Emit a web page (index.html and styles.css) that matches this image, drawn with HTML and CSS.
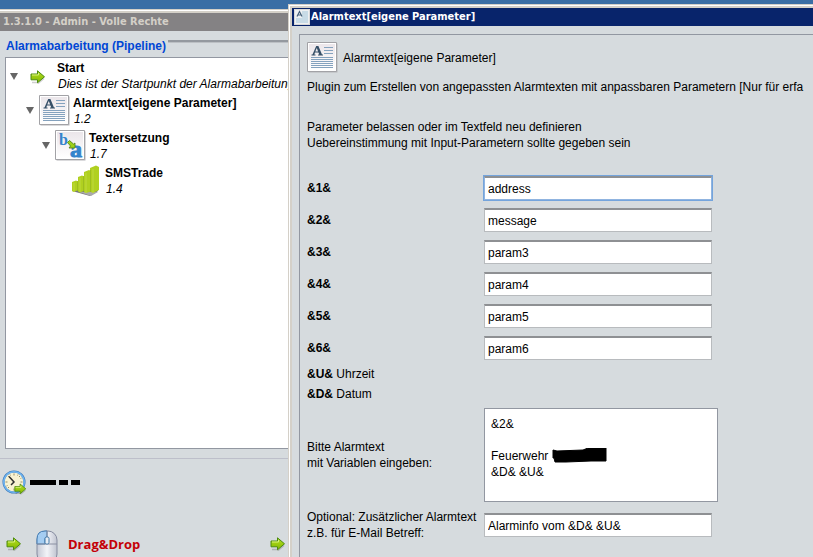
FILE: index.html
```html
<!DOCTYPE html>
<html lang="de">
<head>
<meta charset="utf-8">
<title>Alarmtext[eigene Parameter]</title>
<link rel="stylesheet" href="styles.css">
</head>
<body>
<svg class="defs" aria-hidden="true">
  <defs>
    <linearGradient id="green" x1="0" y1="0" x2="0" y2="1"><stop offset="0" stop-color="#b4e020"/><stop offset="1" stop-color="#84b800"/></linearGradient>
    <linearGradient id="paper" x1="0" y1="0" x2="0" y2="1"><stop offset="0" stop-color="#ebe6ea"/><stop offset="1" stop-color="#fff"/></linearGradient>
    <linearGradient id="shell" x1="0" y1="0" x2="1" y2="0"><stop offset="0" stop-color="#c4c8d4"/><stop offset=".5" stop-color="#f2f4f8"/><stop offset="1" stop-color="#c0c4d0"/></linearGradient>
    <symbol id="arrow" viewBox="0 0 16 14">
      <path d="M2 12.5h6M8 13.5l6-5" stroke="#00000030" stroke-width="1.5"/>
      <path d="M1 4h6.500V.8L14.500 6.800 7.500 12.800V9.800H1z" fill="url(#green)" stroke="#4c8a10" stroke-linejoin="round"/>
      <path d="M2 5h6.500V3" fill="none" stroke="#d8f080"/>
    </symbol>
    <symbol id="sheet" viewBox="0 0 31 31">
      <path d="M1.500 1.500h29v29h-29z" fill="#b4b4b8"/>
      <path d="M.5.5h29v29H.5z" fill="#fff" stroke="#a2a2a6"/>
      <path d="M2 2h26v26H2z" fill="url(#paper)"/>
      <path d="M17 5.500h9M17 8.500h9M17 11.500h9M4 15.500h22M4 17.500h22M4 19.500h22M4 21.500h22M4 23.500h22M4 25.500h22" stroke="#84a2be"/>
      <path d="M9.200 4h2.200L15 12.500h1v1h-5v-1h1.200l-.7-2H8l-.7 2h1.200v1H4.500v-1h1zM9.800 6l-1.500 3.500h2.800z" fill="#365068" fill-rule="evenodd"/>
    </symbol>
    <symbol id="replace" viewBox="0 0 31 31">
      <path d="M1.500 1.500h29v29h-29z" fill="#b4b4b8"/>
      <path d="M.5.5h29v29H.5z" fill="#fff" stroke="#a2a2a6"/>
      <path d="M2 2h26v26H2z" fill="url(#paper)"/>
      <text class="glyph" x="4" y="15" font-size="16">b</text>
      <text class="glyph heavy" x="15" y="27" font-size="24">a</text>
      <path d="M12.500 12.500l2-2 4 3.500 1.500-1v5h-6l1.500-2z" fill="#9cd018" stroke="#4c7c10" stroke-width=".8"/>
    </symbol>
  </defs>
</svg>

<main class="main-window">
  <header class="main-title">1.3.1.0 - Admin - Volle Rechte</header>
  <section class="pipeline">
    <h2 class="legend">Alarmabarbeitung (Pipeline)</h2>
    <ul class="tree">
      <li class="node">
        <span class="twisty"></span><svg class="icon"><use href="#arrow" width="16" height="14" x="7" y="9"/></svg>
        <span class="caption"><b>Start</b><i>Dies ist der Startpunkt der Alarmabarbeitung</i></span>
      </li>
      <li class="node level-1">
        <span class="twisty"></span><svg class="icon"><use href="#sheet" width="31" height="31"/></svg>
        <span class="caption"><b>Alarmtext[eigene Parameter]</b><i>1.2</i></span>
      </li>
      <li class="node level-2">
        <span class="twisty"></span><svg class="icon"><use href="#replace" width="31" height="31"/></svg>
        <span class="caption"><b>Textersetzung</b><i>1.7</i></span>
      </li>
      <li class="node level-3">
        <span class="twisty leaf"></span>
        <svg class="icon" viewBox="0 0 31 31">
          <path d="M1 26l18 5 8-5V8z" fill="#77777b"/>
          <path d="M8 27l12 4 7-4" fill="#aaa"/>
          <g fill="#b0d020"><path d="M1 17l4-1.500 2 1V25l-4 2-2-1z"/><path d="M7 12l4-1.500 2 1V26l-4 1.500-2-1z"/><path d="M13 7l5-2 2 1v20.500L15 28l-2-1z"/><path d="M19 3l6-2.500L28 2v23l-6 3-3-1.500z"/></g>
          <path d="M3 18v9M9 13v14M15 8v20M22 4v24" stroke="#c4dc48" stroke-width=".8"/>
          <path d="M6.500 16v10M12.500 11v15M19.500 5v22" stroke="#98b820" stroke-width=".8"/>
        </svg>
        <span class="caption"><b>SMSTrade</b><i>1.4</i></span>
      </li>
    </ul>
  </section>
  <footer class="status">
    <div class="clock-row">
      <svg class="clock" viewBox="0 0 25 25">
        <circle cx="12" cy="12" r="10.500" fill="#f8f2d2" stroke="#3978b8" stroke-width="2"/>
        <circle cx="12" cy="12" r="10.200" fill="none" stroke="#70b4f0" stroke-width="1.500"/>
        <path d="M12 3.500v2M12 18.500v2M3.500 12h2M18.500 12h2M6 6l1 1M18 6l-1 1M6 18l1-1M16 4.500l-.5 1M8 4.500l.5 1M19.500 8l-1 .5M4.500 16l1-.5" stroke="#968c68"/>
        <path d="M7 6.500l5 5.500-3 3" fill="none" stroke="#303030" stroke-width="1.500"/>
        <use href="#arrow" x="12" y="13" width="13" height="12"/>
      </svg>
      <span class="dash long"></span><span class="dash"></span><span class="dash"></span>
    </div>
    <div class="drag-row">
      <svg class="arrow" viewBox="0 0 16 14"><use href="#arrow" width="16" height="14"/></svg>
      <svg class="mouse" viewBox="0 0 22 34">
        <rect x="1" y="1" width="20" height="32" rx="9" fill="url(#shell)" stroke="#868ca0"/>
        <path d="M1 14V9q0-8 8-8h2v6q-2 0-2 2v5z" fill="#a4cdf2" stroke="#3d78b0"/>
        <path d="M1 14h20M11 1v6" fill="none" stroke="#8a90a2"/>
        <rect x="9" y="7" width="4" height="7" rx="1.500" fill="#e6edf4" stroke="#4278a8"/>
      </svg>
      <strong class="drag-text">Drag&amp;Drop</strong>
      <svg class="arrow" viewBox="0 0 16 14"><use href="#arrow" width="16" height="14"/></svg>
    </div>
  </footer>
</main>

<section class="dialog" role="dialog" aria-labelledby="dialog-title">
  <header class="dialog-title">
    <svg class="title-icon" viewBox="0 0 16 16"><path d="M0 0h16v16H0z" fill="#d8d8d8"/><path d="M1 1h14v14H1z" fill="#eef0f2"/><path d="M8 2h6v12H2V9h6z" fill="#c8dbe6"/><path d="M3 7.500L5.500 2.500 8 7.500M4 6h3" fill="none" stroke="#48637c" stroke-width="1.200"/></svg>
    <h1 id="dialog-title">Alarmtext[eigene Parameter]</h1>
  </header>
  <form class="panel">
    <div class="plugin-head"><svg class="icon"><use href="#sheet" width="31" height="31"/></svg><span>Alarmtext[eigene Parameter]</span></div>
    <p class="about">Plugin zum Erstellen von angepassten Alarmtexten mit anpassbaren Parametern [Nur für erfa</p>
    <p class="hint">Parameter belassen oder im Textfeld neu definieren<br>Uebereinstimmung mit Input-Parametern sollte gegeben sein</p>
    <div class="field"><label for="p1">&amp;1&amp;</label><input class="active" id="p1" type="text" value="address"></div>
    <div class="field"><label for="p2">&amp;2&amp;</label><input id="p2" type="text" value="message"></div>
    <div class="field"><label for="p3">&amp;3&amp;</label><input id="p3" type="text" value="param3"></div>
    <div class="field"><label for="p4">&amp;4&amp;</label><input id="p4" type="text" value="param4"></div>
    <div class="field"><label for="p5">&amp;5&amp;</label><input id="p5" type="text" value="param5"></div>
    <div class="field"><label for="p6">&amp;6&amp;</label><input id="p6" type="text" value="param6"></div>
    <p class="variable"><b>&amp;U&amp;</b> Uhrzeit</p>
    <p class="variable"><b>&amp;D&amp;</b> Datum</p>
    <div class="field message">
      <label for="text">Bitte Alarmtext<br>mit Variablen eingeben:</label>
      <div class="text-wrap">
        <textarea id="text" spellcheck="false">&amp;2&amp;

Feuerwehr
&amp;D&amp; &amp;U&amp;</textarea>
        <svg class="redaction" viewBox="0 0 55 15"><path d="M1 2l4 1 26-1 5-2h18v13H39l-25 1H3L2 10H1z" stroke="#000"/></svg>
      </div>
    </div>
    <div class="field subject">
      <label for="subject">Optional: Zusätzlicher Alarmtext<br>z.B. für E-Mail Betreff:</label>
      <input id="subject" type="text" value="Alarminfo vom &amp;D&amp; &amp;U&amp;">
    </div>
  </form>
</section>
</body>
</html>
```
FILE: styles.css
```css
* { box-sizing: border-box; }

body {
  margin: 0;
  min-height: 100vh;
  padding-top: 9px;
  display: flex;
  overflow: hidden;
  background: #3a6ea5;
  color: #000;
  font: 12px/16px "Liberation Sans", Arial, sans-serif;
}

h1, h2, p, ul { margin: 0; padding: 0; }
.defs { position: absolute; width: 0; height: 0; }
.icon { flex: none; width: 31px; height: 31px; }
.glyph { fill: #3484cc; font-family: "Liberation Serif", serif; font-weight: bold; }
.heavy { stroke: #3484cc; }

/* Main window */
.main-window {
  flex: 1;
  display: flex;
  flex-direction: column;
  height: calc(100vh - 9px);
  border-top: 1px solid #d4d0c8;
  background: #d6dbde;
  box-shadow: inset 0 1px #fff, inset 0 3px #d4d0c8;
}

.main-title {
  margin-top: 3px;
  padding-left: 3px;
  background: #848284;
  color: #d4d0c8;
  font: bold 11px/18px "DejaVu Sans Condensed", "DejaVu Sans", sans-serif;
}

.pipeline { flex: 1; display: flex; flex-direction: column; padding: 7px 0 0 5px; }

.legend {
  display: flex;
  padding-left: 1px;
  color: #0046d5;
  font-size: 12px;
  line-height: 16px;
  white-space: nowrap;
}
.legend::after {
  content: "";
  flex: 1;
  height: 2px;
  margin: 2px 0 0 2px;
  background: #94999f;
  border-bottom: 1px solid #bcc0c4;
}

.tree {
  flex: 1;
  margin-top: 3px;
  padding-top: 1px;
  list-style: none;
  background: #fff;
  border: 1px solid #9297a1;
}
.node { display: flex; align-items: center; height: 35px; padding-left: 4px; white-space: nowrap; }
.node:first-child { height: 34px; }
.level-1 { padding-left: 20px; }
.level-2 { padding-left: 36px; }
.level-3 { padding-left: 52px; }
.twisty {
  flex: none;
  width: 8px;
  margin-right: 5px;
  border: 4px solid transparent;
  border-top: 7px solid #666;
  border-bottom: 0;
}
.leaf { visibility: hidden; }
.caption { display: flex; flex-direction: column; padding-left: 3px; }
.caption i { padding-left: 1px; }

.status {
  height: 99px;
  margin-top: 9px;
  border-top: 1px solid #bdbfca;
  display: flex;
  flex-direction: column;
  justify-content: space-between;
}
.clock-row { display: flex; align-items: center; gap: 3px; padding: 11px 0 0 2px; }
.clock { width: 25px; height: 25px; }
.dash { width: 9px; height: 5px; background: #000; }
.long { width: 26px; }
.drag-row { display: flex; align-items: center; width: 286px; height: 27px; padding-left: 6px; }
.arrow { width: 16px; height: 14px; }
.mouse { width: 22px; height: 34px; margin: 7px 10px 0 14px; }
.drag-text {
  flex: 1;
  color: #c40008;
  font: bold 13px/20px "Open Sans", "Noto Sans", sans-serif;
}

/* Dialog window, floating over the main window */
.dialog {
  position: absolute;
  inset: 4px 0 0 288px;
  padding: 3px 0 0 3px;
  display: flex;
  flex-direction: column;
  overflow: hidden;
  background: #d6dbde;
  border: solid #d4d0c8;
  border-width: 1px 0 0 1px;
  box-shadow: inset 1px 1px #fff, inset 3px 3px #d4d0c8;
}
.dialog-title {
  display: flex;
  align-items: center;
  gap: 1px;
  padding-left: 2px;
  height: 18px;
  background: #08246b;
  color: #fff;
}
.title-icon { width: 16px; height: 16px; }
.dialog-title h1 { font: bold 11px/18px "DejaVu Sans Condensed", "DejaVu Sans", sans-serif; }

.panel {
  flex: 1;
  margin: 8px 0 0 7px;
  padding: 7px 0 0 7px;
  border: solid #9297a1;
  border-width: 1px 0 0 1px;
  white-space: nowrap;
}
.plugin-head { display: flex; align-items: center; gap: 5px; }
.about { margin-top: 6px; }
.hint { margin: 24px 0 21px; }

.field { display: grid; grid-template-columns: 177px 228px; align-items: center; height: 32px; }
.field label { font-weight: bold; }
.message label, .subject label { font-weight: normal; }

input, textarea {
  width: 100%;
  padding: 0 3px;
  background: #fff;
  border: 1px solid #b8bbbe;
  border-radius: 0;
  color: #000;
  font: inherit;
  outline: 0;
}
input { height: 24px; border-top: 2px solid #8e9093; }
.active { box-shadow: 0 0 0 1px #74a4dc; border-color: #8e9093 #90b4e0 #90b4e0; }

.variable { line-height: 20px; }
.message { grid-template-columns: 177px 234px; height: 94px; margin: 4px 0 7px; }
.text-wrap { position: relative; height: 94px; }
textarea { display: block; height: 100%; padding: 7px 6px; border-color: #9297a1; resize: none; }
.redaction { position: absolute; left: 68px; top: 40px; width: 55px; height: 15px; }
```
